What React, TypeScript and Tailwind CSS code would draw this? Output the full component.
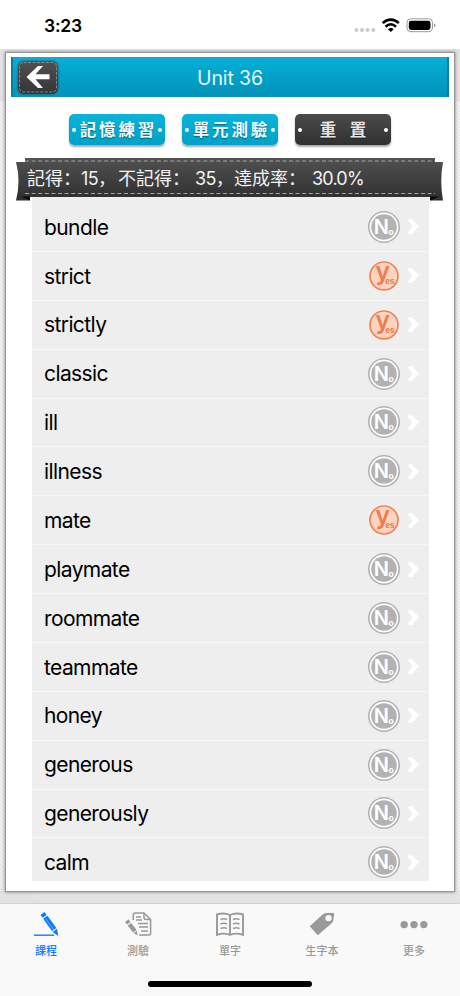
import { clsx } from "clsx";

const words = [
  { text: "bundle", known: false },
  { text: "strict", known: true },
  { text: "strictly", known: true },
  { text: "classic", known: false },
  { text: "ill", known: false },
  { text: "illness", known: false },
  { text: "mate", known: true },
  { text: "playmate", known: false },
  { text: "roommate", known: false },
  { text: "teammate", known: false },
  { text: "honey", known: false },
  { text: "generous", known: false },
  { text: "generously", known: false },
  { text: "calm", known: false },
];

const StatusBar = () => (
  <div className="h-[49px] shrink-0 bg-white flex items-start justify-between pl-[44px] pr-[24px] pt-[15px]">
    <span className="text-[17.5px] leading-[21px] font-semibold tracking-[-0.2px] text-black">3:23</span>
    <svg width="82" height="20" viewBox="354 15 82 20">
      <g fill="#cbcbcb">
        <circle cx="356.5" cy="30" r="2" />
        <circle cx="362" cy="30" r="2" />
        <circle cx="367.5" cy="30" r="2" />
        <circle cx="373.3" cy="30" r="2" />
      </g>
      <g fill="none" stroke="#000" strokeWidth="2.6">
        <path d="M382.7 23.2C387.5 18.4 394 18.4 398.8 23.2" />
        <path d="M385.6 26.7C388.8 23.6 392.8 23.6 396 26.7" />
      </g>
      <path d="M387.9 29.2C389.8 27.7 391.8 27.7 393.7 29.2L390.8 32Z" />
      <rect x="407" y="18.8" width="25.5" height="12.9" rx="3.8" fill="none" stroke="#999" />
      <rect x="408.8" y="20.7" width="21.7" height="9.2" rx="2.3" />
      <path d="M434 23.2Q437 25.3 434 27.4Z" fill="#999" />
    </svg>
  </div>
);

const Header = () => (
  <header className="relative h-10 flex items-center justify-center bg-gradient-to-b from-[#06afd8] to-[#0492b8] border-l-2 border-r-2 border-[#087f9f]">
    <button className="absolute left-[5px] top-[4px] w-[40px] h-[33px] rounded-[6px] bg-gradient-to-b from-[#525252] to-[#343434] shadow-[0_0_2px_#333]">
      <svg width="40" height="33" viewBox="0 0 40 33">
        <rect x="1.5" y="1.5" width="37" height="29.5" rx="4" fill="none" stroke="#999" strokeWidth="0.8" strokeDasharray="3 1.5" />
        <path d="M8.5 16L20 5H25L17.5 13.3H31.5V18.2H17.5L25 27H20Z" fill="#fff" />
      </svg>
    </button>
    <h1 className="pt-[3px] text-[19.5px] tracking-[-0.1px] text-[#e8fbff]">Unit 36</h1>
  </header>
);

const PillButton = ({ label, dark = false }: { label: string; dark?: boolean }) => (
  <button
    className={clsx(
      "w-24 h-[31px] rounded-[5px] flex items-center justify-between px-[3px] bg-gradient-to-b shadow-[0_2px_2px_#aaa]",
      dark ? "from-[#4c4c4c] to-[#303030]" : "from-[#09b4d8] to-[#00a2c7]"
    )}
  >
    <span className="w-1 h-1 shrink-0 rounded-full bg-white" />
    <span
      className={clsx(
        "pt-px text-[16.5px] leading-none font-bold whitespace-nowrap [text-shadow:0_1px_1px_#0006]",
        dark ? "tracking-[13.5px] -mr-[13.5px] text-[#e4e4e4]" : "tracking-[2.9px] -mr-[2.9px] text-[#f2fdff]"
      )}
    >
      {label}
    </span>
    <span className="w-1 h-1 shrink-0 rounded-full bg-white" />
  </button>
);

const Ribbon = () => (
  <div className="relative h-[39px] pl-[11px] pt-[6px]">
    <svg className="absolute left-0 top-0" width="428" height="44" viewBox="0 0 428 44">
      <defs>
        <linearGradient id="ribbon" x1="0" y1="0" x2="0" y2="1">
          <stop offset="0" stopColor="#515151" />
          <stop offset="1" stopColor="#2e2e2e" />
        </linearGradient>
      </defs>
      <path d="M0 4H9V0H419V4H427Q423.5 23 427 42.5H414V39H14V42.5H0Q5 23 0 4Z" fill="url(#ribbon)" />
      <path d="M5 38.5H14V42.5ZM423 38.5H414V42.5Z" fill="#080808" />
      <path d="M9 3H419M9 35.5H419" stroke="#a5a5a5" strokeDasharray="4 2.6" fill="none" />
    </svg>
    <p
      lang="zh-CN"
      className="relative flex text-[18px] leading-[29px] whitespace-nowrap text-[#f2f2f2] font-['Inter','Noto_Sans_CJK_SC',sans-serif]"
    >
      <span className="w-[54px]">記得：</span>
      <span className="w-[37px] tracking-[-0.6px]">15，</span>
      <span className="w-[77px]">不記得：</span>
      <span className="w-[39px] tracking-[-0.6px]">35，</span>
      <span className="w-[78px]">達成率：</span>
      <span className="tracking-[-0.8px]">30.0%</span>
    </p>
  </div>
);

const Badge = ({ known }: { known: boolean }) =>
  known ? (
    <svg width="32" height="32" viewBox="0 0 32 32" className="shrink-0 overflow-visible">
      <circle cx="16" cy="16" r="14" fill="#fcd5c0" stroke="#ef8457" strokeWidth="1.7" />
      <text x="7.5" y="20" fontSize="24.5" fontWeight="600" fill="#ed7d52">
        y
        <tspan x="17.2" y="24.3" fontSize="8" fontWeight="700">es</tspan>
      </text>
    </svg>
  ) : (
    <svg width="32" height="32" viewBox="0 0 32 32" className="shrink-0">
      <circle cx="16" cy="16" r="15.2" fill="#fff" stroke="#b2b2b2" strokeWidth="1.6" />
      <circle cx="16" cy="16" r="12.8" fill="#b2b2b2" />
      <text x="5.8" y="22.8" fontSize="20" fontWeight="600" fill="#fff">
        N
        <tspan x="20.6" y="23.5" fontSize="8.5" fontWeight="700">o</tspan>
      </text>
    </svg>
  );

const WordRow = ({ text, known }: { text: string; known: boolean }) => (
  <li className="h-[48.88px] shrink-0 flex items-center pl-3 pr-[10px] border-b border-[#f8f8f8]">
    <span className="flex-1 pt-px text-[21px] tracking-[-0.6px] text-black">{text}</span>
    <Badge known={known} />
    <svg width="12" height="17" viewBox="0 0 12 17" className="ml-[7px]">
      <path d="M0.5 2L4.5 0.8L12 8.3L4.5 16.5L0.5 15L5.5 8.5Z" fill="#fff" />
    </svg>
  </li>
);

const PencilLine = () => (
  <svg width="28" height="28" viewBox="0 0 28 28">
    <path d="M8.5 4L12.5 1L14.7 3.9L10.6 6.8ZM11.2 7.7L15.4 4.7L24.3 17.1L20 20.1ZM20.6 20.9L25 17.8L26.3 25Z" fill="currentColor" />
    <path d="M13.6 7.6L21.8 18.8" stroke="#8ec5ff" strokeWidth="0.7" />
    <path d="M2 24.2H22" stroke="currentColor" strokeWidth="1.4" />
  </svg>
);

const PencilPage = () => (
  <svg width="28" height="28" viewBox="0 0 28 28" fill="none" stroke="currentColor" strokeWidth="1.5">
    <path d="M9.3 9V4Q9.3 2 11.3 2H20L26.6 8.5V22Q26.6 24 24.6 24H15" />
    <path d="M20 2V6.5Q20 8.5 22 8.5H26.6M12 6H17M12 9H18M14 12.5H24M15 16H24M17 20H24" />
    <path d="M1 11L4.5 8.3L6.5 11L3 13.5ZM3.7 14.4L7.2 11.9L12.5 19L9 21.5ZM9.6 22.2L13 19.8L13.5 24.5Z" fill="currentColor" stroke="none" />
  </svg>
);

const OpenBook = () => (
  <svg width="30" height="28" viewBox="0 0 30 28" fill="none" stroke="currentColor" strokeWidth="1.9">
    <path d="M15 4Q8.5 1.2 2 3.5V23.8Q8.5 21.5 15 23.8Q21.5 21.5 28 23.8V3.5Q21.5 1.2 15 4ZM15 4V23.5" />
    <path d="M5.5 8.5Q9 7 12 8.5M5.5 13Q9 11.5 12 13M5.5 17.5Q9 16 12 17.5M18 8.5Q21 7 24.5 8.5M18 13Q21 11.5 24.5 13M18 17.5Q21 16 24.5 17.5" strokeWidth="1.5" />
  </svg>
);

const Tag = () => (
  <svg width="28" height="28" viewBox="0 0 28 28">
    <path fillRule="evenodd" d="M1.7 15.2L15 3.2Q16 2.3 18 2.1L25.3 2Q26.3 2 26.2 3L25.3 9Q25 11 24 12L9.8 24.2ZM20.5 3.9A3.2 3.2 0 1 0 20.5 10.3A3.2 3.2 0 1 0 20.5 3.9Z" fill="currentColor" />
  </svg>
);

const Dots = () => (
  <svg width="28" height="28" viewBox="0 0 28 28" fill="currentColor">
    <circle cx="4.2" cy="13.6" r="3.7" />
    <circle cx="14" cy="13.6" r="3.7" />
    <circle cx="23.8" cy="13.6" r="3.7" />
  </svg>
);

const tabs = [
  { label: "課程", icon: PencilLine, active: true },
  { label: "測驗", icon: PencilPage },
  { label: "單字", icon: OpenBook },
  { label: "生字本", icon: Tag },
  { label: "更多", icon: Dots },
];

const TabBar = () => (
  <nav className="h-[93px] shrink-0 bg-[#f9f9f9] border-t border-[#d0d0d0] flex flex-col items-center">
    <div className="w-full h-[77px] grid grid-cols-5 pt-[7px]">
      {tabs.map((tab) => (
        <div
          key={tab.label}
          className={clsx("flex flex-col items-center", tab.active ? "text-[#087cff]" : "text-[#999]")}
        >
          <tab.icon />
          <span className="mt-[4px] text-[11px] leading-[16px] font-medium">{tab.label}</span>
        </div>
      ))}
    </div>
    <div className="w-[164px] h-[6px] rounded-full bg-black" />
  </nav>
);

export default function App() {
  return (
    <div className="w-[460px] h-[996px] overflow-hidden flex flex-col bg-white font-['Inter','Noto_Sans_CJK_TC',sans-serif]">
      <StatusBar />
      <main className="h-[854px] shrink-0 pl-[5px] pr-[5px] pt-[3px] pb-[11px] bg-[#e6e6e6] bg-[linear-gradient(#e2e2e2_0_52px,transparent_52px_842px,#dededeaa_842px),repeating-linear-gradient(45deg,#f6f6f6_0_1.4px,transparent_1.4px_2.83px)]">
        <section className="h-[840px] bg-white border border-[#969696] shadow-[0_0_3px_#777] px-[5px] pt-[4px]">
          <Header />
          <div className="mt-[17px] pl-[58px] flex gap-[17px]">
            <PillButton label="記憶練習" />
            <PillButton label="單元測驗" />
            <PillButton label="重置" dark />
          </div>
          <div className="mt-[13px] ml-[5px]">
            <Ribbon />
          </div>
          <ul className="ml-[21px] w-[396.5px] h-[684px] pt-[6px] overflow-hidden flex flex-col bg-[#eee]">
            {words.map((word) => (
              <WordRow key={word.text} {...word} />
            ))}
          </ul>
        </section>
      </main>
      <TabBar />
    </div>
  );
}
